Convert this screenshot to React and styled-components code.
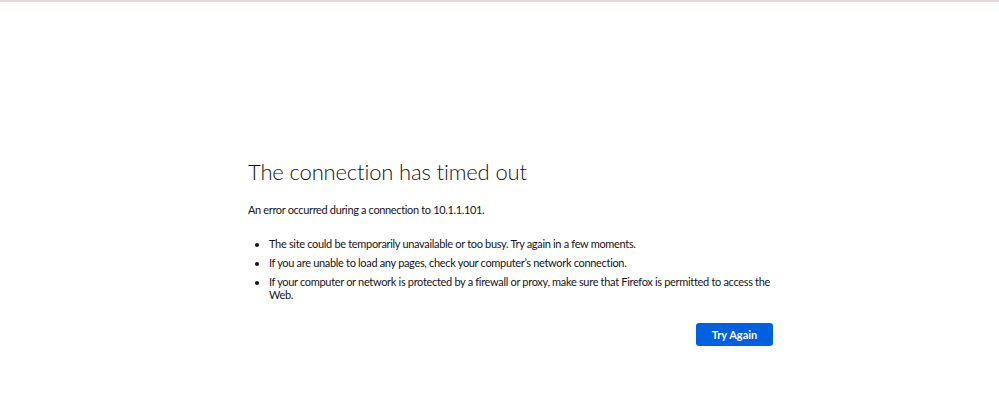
import styled, { createGlobalStyle } from 'styled-components';

const Global = createGlobalStyle`
  html, body { margin: 0; padding: 0; background: #fff; }
  body { font-family: Lato, "Open Sans", sans-serif; color: #15141a; }
`

const Page = styled.div`
  width: 999px;
  height: 405px;
  box-sizing: border-box;
  border-top: 2px solid #ead6d6;
  display: flex;
  justify-content: center;
  padding-left: 22px;
`

const Container = styled.div`
  width: 525px;
  padding-top: 155px;
`

const Title = styled.h1`
  margin: 0;
  font-size: 22px;
  font-weight: 300;
  line-height: 29px;
  letter-spacing: -0.15px;
`

const Intro = styled.p`
  margin: 16px 0 20px;
  font-size: 11px;
  line-height: 15px;
  letter-spacing: -0.35px;
`

const List = styled.ul`
  margin: 0;
  padding-left: 21px;
  font-size: 11px;
  line-height: 13px;
  letter-spacing: -0.32px;
`

const Item = styled.li`
  margin-bottom: 6px;
`

const Actions = styled.div`
  display: flex;
  justify-content: flex-end;
  margin-top: 22px;
`

const Button = styled.button`
  background: #0061e0;
  color: #fff;
  border: none;
  border-radius: 3px;
  width: 77px;
  height: 23px;
  padding: 0;
  font-family: inherit;
  font-size: 11px;
  font-weight: 700;
  cursor: pointer;
`

export default function App() {
  return (
    <Page>
      <Global />
      <Container>
        <Title>The connection has timed out</Title>
        <Intro>An error occurred during a connection to 10.1.1.101.</Intro>
        <List>
          <Item>The site could be temporarily unavailable or too busy. Try again in a few moments.</Item>
          <Item>If you are unable to load any pages, check your computer’s network connection.</Item>
          <Item>If your computer or network is protected by a firewall or proxy, make sure that Firefox is permitted to access the Web.</Item>
        </List>
        <Actions>
          <Button>Try Again</Button>
        </Actions>
      </Container>
    </Page>
  )
}
